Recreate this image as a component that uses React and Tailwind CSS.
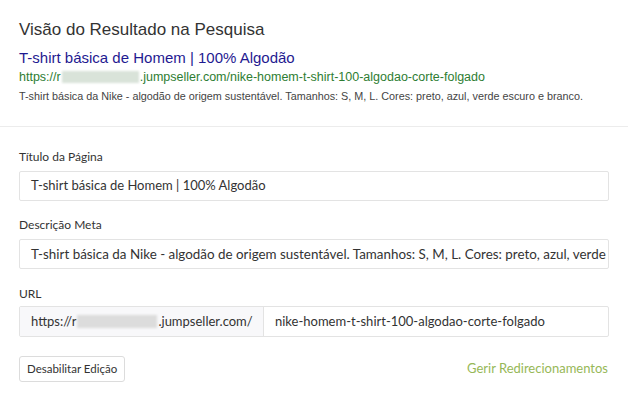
import React from 'react';

const arial = { fontFamily: '"Liberation Sans", Arial, sans-serif' };

function Blur({ w }) {
    return (
        <span className="relative mx-[1px] inline-flex h-[12px] items-center align-middle">
            <span className={`${w} h-full bg-[#d9e3d9] blur-[1px]`} />
        </span>
    );
}

function GrayBlur({ w }) {
    return (
        <span className="relative mx-[1px] inline-flex h-[13px] items-center align-middle">
            <span className={`${w} h-full bg-[#dcdcdc] blur-[1px]`} />
        </span>
    );
}

export default function App() {
    return (
        <div className="h-[405px] w-[628px] overflow-hidden bg-white font-['Lato',sans-serif] text-[#333]">
            <section className="border-b border-[#ececec] px-[19px] pb-[22px] pt-[19px]" style={arial}>
                <h2 className="text-[17px] leading-[22px] text-[#333]">Visão do Resultado na Pesquisa</h2>
                <p className="mt-[7px] text-[15px] leading-[20px] text-[#1f1a91]">T-shirt básica de Homem | 100% Algodão</p>
                <p className="mt-[1px] flex items-center text-[12.5px] leading-[16px] text-[#2e7d32]">
                    https://r<Blur w="w-[77px]" />.jumpseller.com/nike-homem-t-shirt-100-algodao-corte-folgado
                </p>
                <p className="mt-[4px] text-[10.8px] leading-[15px] text-[#444]">
                    T-shirt básica da Nike - algodão de origem sustentável. Tamanhos: S, M, L. Cores: preto, azul, verde escuro e branco.
                </p>
            </section>

            <section className="px-[19px] pt-[22px]">
                <label className="block text-[12px] leading-[16px] text-[#333]">Título da Página</label>
                <div className="mt-[6px] flex h-[30px] items-center rounded-[2px] border border-[#e3e3e3] px-[11px] text-[13px] text-[#333]">
                    T-shirt básica de Homem | 100% Algodão
                </div>

                <label className="mt-[16px] block text-[12px] leading-[16px] text-[#333]">Descrição Meta</label>
                <div className="mt-[6px] flex h-[30px] items-center overflow-hidden whitespace-nowrap rounded-[2px] border border-[#e3e3e3] px-[11px] text-[13.4px] text-[#333]">
                    T-shirt básica da Nike - algodão de origem sustentável. Tamanhos: S, M, L. Cores: preto, azul, verde escuro e branco.
                </div>

                <label className="mt-[17px] block text-[12px] leading-[16px] text-[#333]">URL</label>
                <div className="mt-[4px] flex h-[31px] overflow-hidden rounded-[2px] border border-[#e3e3e3] text-[13px] text-[#333]">
                    <div className="flex w-[244px] shrink-0 items-center border-r border-[#e3e3e3] bg-[#f8f8fa] px-[11px]">
                        https://r<GrayBlur w="w-[80px]" />.jumpseller.com/
                    </div>
                    <div className="flex flex-1 items-center px-[11px]">nike-homem-t-shirt-100-algodao-corte-folgado</div>
                </div>

                <div className="mt-[19px] flex items-center justify-between">
                    <button className="h-[26px] rounded-[3px] border border-[#dcdcdc] bg-white px-[7px] text-[11.5px] text-[#333]">
                        Desabilitar Edição
                    </button>
                    <a className="pr-[1px] text-[13px] text-[#97b857]">Gerir Redirecionamentos</a>
                </div>
            </section>
        </div>
    );
}
